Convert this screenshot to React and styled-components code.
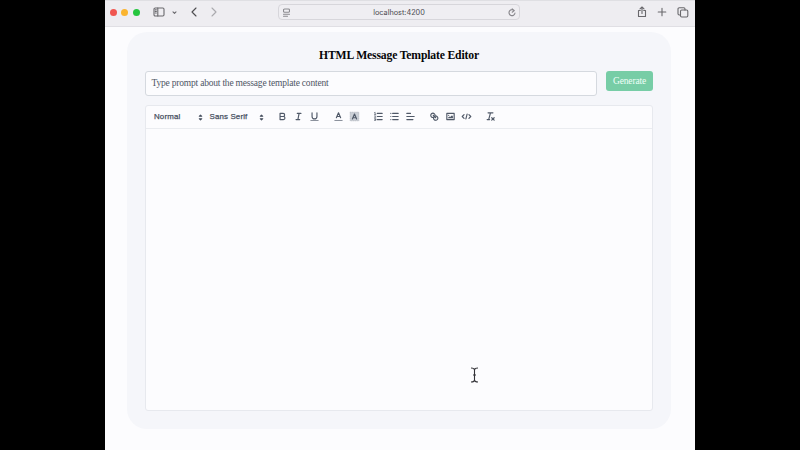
import React from "react";
import styled, { createGlobalStyle } from "styled-components";

const GlobalStyle = createGlobalStyle`
  * { box-sizing: border-box; }
  body { margin: 0; background: #000; overflow: hidden; }
`;

const Screen = styled.div`
  width: 800px;
  height: 450px;
  display: flex;
  justify-content: center;
  background: #000;
  position: relative;
`;

const BrowserWindow = styled.div`
  width: 590px;
  height: 450px;
  display: flex;
  flex-direction: column;
  background: #fcfcfe;
`;

const TitleBar = styled.header`
  height: 27px;
  flex: none;
  display: grid;
  grid-template-columns: 173px 242px 1fr;
  align-items: center;
  background: #eeedf1;
  border-top: 1px solid #dfdfe3;
  border-bottom: 1px solid #e0dfe4;
  padding-bottom: 3px;
`;

const LeftControls = styled.div`
  display: flex;
  align-items: center;
  padding-left: 5px;
`;

const Dot = styled.span`
  width: 7px;
  height: 7px;
  border-radius: 50%;
  background: ${(p) => p.$color};
  margin-right: ${(p) => p.$gap}px;
`;

const RightControls = styled.div`
  display: flex;
  align-items: center;
  justify-content: flex-end;
  gap: 10px;
  padding-right: 6px;
`;

const Icon = styled.svg`
  display: block;
  flex: none;
  width: ${(p) => p.$w}px;
  height: ${(p) => p.$h || p.$w}px;
  margin-left: ${(p) => p.$ml || 0}px;
  fill: none;
  stroke: ${(p) => p.$color || "#69686c"};
  stroke-width: 1.1;
  stroke-linecap: round;
  stroke-linejoin: round;
`;

const AddressBar = styled.div`
  height: 16px;
  display: flex;
  align-items: center;
  justify-content: space-between;
  padding: 0 3px 0 4px;
  border: 1px solid #d7d6db;
  border-radius: 4px;
  background: #efeef2;
  color: #4b4a4f;
  font: 7.3px/14px "Inter", "Liberation Sans", sans-serif;
`;

const Address = styled.span`
  padding-top: 1px;
`;

const Card = styled.main`
  width: 544px;
  height: 397px;
  margin: 5px 0 0 22px;
  padding: 15px 18px 0;
  border-radius: 20px;
  background: #f5f6fa;
`;

const Title = styled.h1`
  margin: 0;
  height: 24px;
  text-align: center;
  color: #050507;
  font: bold 11.7px/18px "Liberation Serif", serif;
  letter-spacing: -0.17px;
`;

const PromptRow = styled.div`
  display: flex;
  align-items: flex-start;
  gap: 9px;
`;

const PromptInput = styled.div`
  width: 452px;
  height: 25px;
  padding-left: 5.5px;
  border: 1px solid #d5d9df;
  border-radius: 3px;
  background: #fcfcfe;
  color: #4f5665;
  font: 9.5px/23px "Liberation Serif", serif;
  letter-spacing: -0.2px;
`;

const GenerateButton = styled.button`
  width: 47px;
  height: 20px;
  padding: 0;
  border: 0;
  border-radius: 3px;
  background: #77cda6;
  color: #f0fff8;
  font: 9.5px/20px "Liberation Serif", serif;
  letter-spacing: -0.15px;
`;

const Editor = styled.section`
  height: 306px;
  width: 508px;
  margin-top: 9px;
  border: 1px solid #e7e9ee;
  border-radius: 3px;
  background: #fcfcfe;
`;

const Toolbar = styled.div`
  height: 23px;
  display: flex;
  align-items: center;
  padding-left: 4px;
  border-bottom: 1px solid #eaecf0;
`;

const Picker = styled.div`
  width: ${(p) => p.$width}px;
  display: flex;
  align-items: center;
  justify-content: space-between;
  padding: 0 0 0 4px;
  color: #47505f;
  font: 7.9px/14px "Liberation Sans", sans-serif;
  letter-spacing: 0.15px;
  -webkit-text-stroke: 0.25px #47505f;
`;

const Group = styled.div`
  display: flex;
  margin-left: 8px;
`;

const Tool = styled.span`
  width: 16px;
  height: 14px;
  display: flex;
  align-items: flex-start;
  justify-content: center;
  padding-top: 1px;
`;

const Glyph = styled.svg`
  width: 11px;
  height: 11px;
  fill: none;
  stroke: #505968;
  stroke-width: 1.9;
  stroke-linecap: round;
  stroke-linejoin: round;
  .f { fill: #505968; stroke: none; }
  .t { stroke-width: 1.1; }
`;

const Arrows = styled.svg`
  width: 11px;
  height: 11px;
  fill: #485160;
  stroke: #485160;
  stroke-width: 1.8;
  stroke-linejoin: round;
`;

const TextCursor = styled.svg`
  position: absolute;
  left: 470px;
  top: 367px;
  width: 9px;
  height: 16px;
  fill: none;
  stroke: #333338;
  stroke-width: 1.1;
`;

const glyphs = {
  bold: <path d="M5 4h5a2.5 2.5 0 0 1 0 5H5zM5 9h5.5a2.5 2.5 0 0 1 0 5H5z" />,
  italic: <path d="M7 4h6M5 14h6M8 14l2-10" />,
  underline: <><path d="M5 3v6a4 4 0 0 0 8 0V3" /><path className="t" d="M3 15.5h12" /></>,
  color: <><path className="t" d="M3 15.5h12" /><path d="M5.5 11L9 3l3.5 8M6.6 9h4.8" /></>,
  background: <><rect x="2" y="2" width="14" height="14" fill="#cbd0d7" stroke="#a7adb7" strokeWidth="1" strokeDasharray="1 2" /><path d="M5.5 13L9 5l3.5 8M6.6 11h4.8" /></>,
  ordered: <><path d="M7 4h8M7 9h8M7 14h8" /><path className="t" d="M2.5 2.5l1-.5v3.5M2.5 5.5h2M2.5 8h2l-2 2.5h2M2.5 12.5h2v3h-2M3 14h1.5" /></>,
  bullet: <path d="M6 4h9M6 9h9M6 14h9M3 4h0M3 9h0M3 14h0" />,
  align: <path d="M3 9h12M3 14h10M3 4h6" />,
  link: <><path d="M7 7l4 4" /><path d="M8.9 4.6a3.6 3.6 0 0 1 .1 5.1 3.6 3.6 0 0 1-5.1-.1A3.6 3.6 0 0 1 4 4.5a3.6 3.6 0 0 1 4.9.1zM13.4 9.1a3.6 3.6 0 0 1 .1 5.1 3.6 3.6 0 0 1-5.1-.1A3.6 3.6 0 0 1 8.5 9a3.6 3.6 0 0 1 4.9.1z" /></>,
  image: <><rect x="3" y="4" width="12" height="10" /><circle className="f" cx="6" cy="7" r="1" /><path className="f" d="M5 12v-1l2-2 1.5 1L11.5 7 13 9v3z" /></>,
  code: <path d="M5 6L2 9l3 3M13 6l3 3-3 3M10 5L8 13" />,
  clean: <><path d="M5 3h8M6 14l3-11M3.5 14h4" /><path d="M11 11l4 4M15 11l-4 4" /></>,
};

const groups = [
  ["bold", "italic", "underline"],
  ["color", "background"],
  ["ordered", "bullet", "align"],
  ["link", "image", "code"],
  ["clean"],
];

function StylePicker({ label, width }) {
  return (
    <Picker $width={width}>
      {label}
      <Arrows viewBox="0 0 18 18"><path d="M7 7l2-2 2 2zM7 11l2 2 2-2z" /></Arrows>
    </Picker>
  );
}

function BrowserBar() {
  return (
    <TitleBar>
      <LeftControls>
        <Dot $color="#f05650" $gap={4.3} />
        <Dot $color="#fab42f" $gap={4.3} />
        <Dot $color="#25c53e" $gap={0} />
        <Icon $w={12} $h={10} $ml={13.6} viewBox="0 0 12 10">
          <rect x="1" y="1" width="10" height="8" rx="1.2" />
          <path d="M4.8 1v8M2.3 2.8h1M2.3 4.4h1M2.3 6h1" />
        </Icon>
        <Icon $w={5} $h={5} $ml={7} viewBox="0 0 5 5"><path d="M1 1.8l1.5 1.5L4 1.8" /></Icon>
        <Icon $w={6} $h={10} $ml={14} $color="#4d4c50" viewBox="0 0 6 10"><path d="M5 1L1 5l4 4" /></Icon>
        <Icon $w={6} $h={10} $ml={14} $color="#aaa9ae" viewBox="0 0 6 10"><path d="M1 1l4 4-4 4" /></Icon>
      </LeftControls>
      <AddressBar>
        <Icon $w={7} $h={9} viewBox="0 0 7 9" $color="#8c8b90">
          <rect x=".5" y="1" width="6" height="3.3" rx="1" /><path d="M.5 6.2h6M.5 8.2h4" />
        </Icon>
        <Address>localhost:4200</Address>
        <Icon $w={8} $h={9} viewBox="0 0 8 9" $color="#88878c">
          <path d="M6.3 2.7A3 3 0 1 0 7 5M4.2.8l2 1.8-2 1.6" />
        </Icon>
      </AddressBar>
      <RightControls>
        <Icon $w={10} $h={12} viewBox="0 0 10 12">
          <path d="M3.3 4.5H1.5v6h7v-6H6.7M5 7.5V1M3 2.8L5 1l2 1.8" />
        </Icon>
        <Icon $w={10} viewBox="0 0 10 10"><path d="M5 1.2v7.6M1.2 5h7.6" /></Icon>
        <Icon $w={12} $h={11} viewBox="0 0 12 11">
          <rect x="3.5" y="3" width="7.3" height="7" rx="1.2" />
          <path d="M3.5 8H2.3Q1 8 1 6.8V2Q1 .8 2.3.8h4.5Q8 .8 8 2v1" />
        </Icon>
      </RightControls>
    </TitleBar>
  );
}

export default function App() {
  return (
    <Screen>
      <GlobalStyle />
      <BrowserWindow>
        <BrowserBar />
        <Card>
          <Title>HTML Message Template Editor</Title>
          <PromptRow>
            <PromptInput>Type prompt about the message template content</PromptInput>
            <GenerateButton>Generate</GenerateButton>
          </PromptRow>
          <Editor>
            <Toolbar>
              <StylePicker label="Normal" width={55.5} />
              <StylePicker label="Sans Serif" width={61} />
              {groups.map((group) => (
                <Group key={group[0]}>
                  {group.map((name) => (
                    <Tool key={name}><Glyph viewBox="0 0 18 18">{glyphs[name]}</Glyph></Tool>
                  ))}
                </Group>
              ))}
            </Toolbar>
          </Editor>
        </Card>
      </BrowserWindow>
      <TextCursor viewBox="0 0 9 16">
        <path d="M1 1q3.5 0 3.5 2v10q0 2-3.5 2M8 1q-3.5 0-3.5 2M8 15q-3.5 0-3.5-2M3 8h3" />
      </TextCursor>
    </Screen>
  );
}
